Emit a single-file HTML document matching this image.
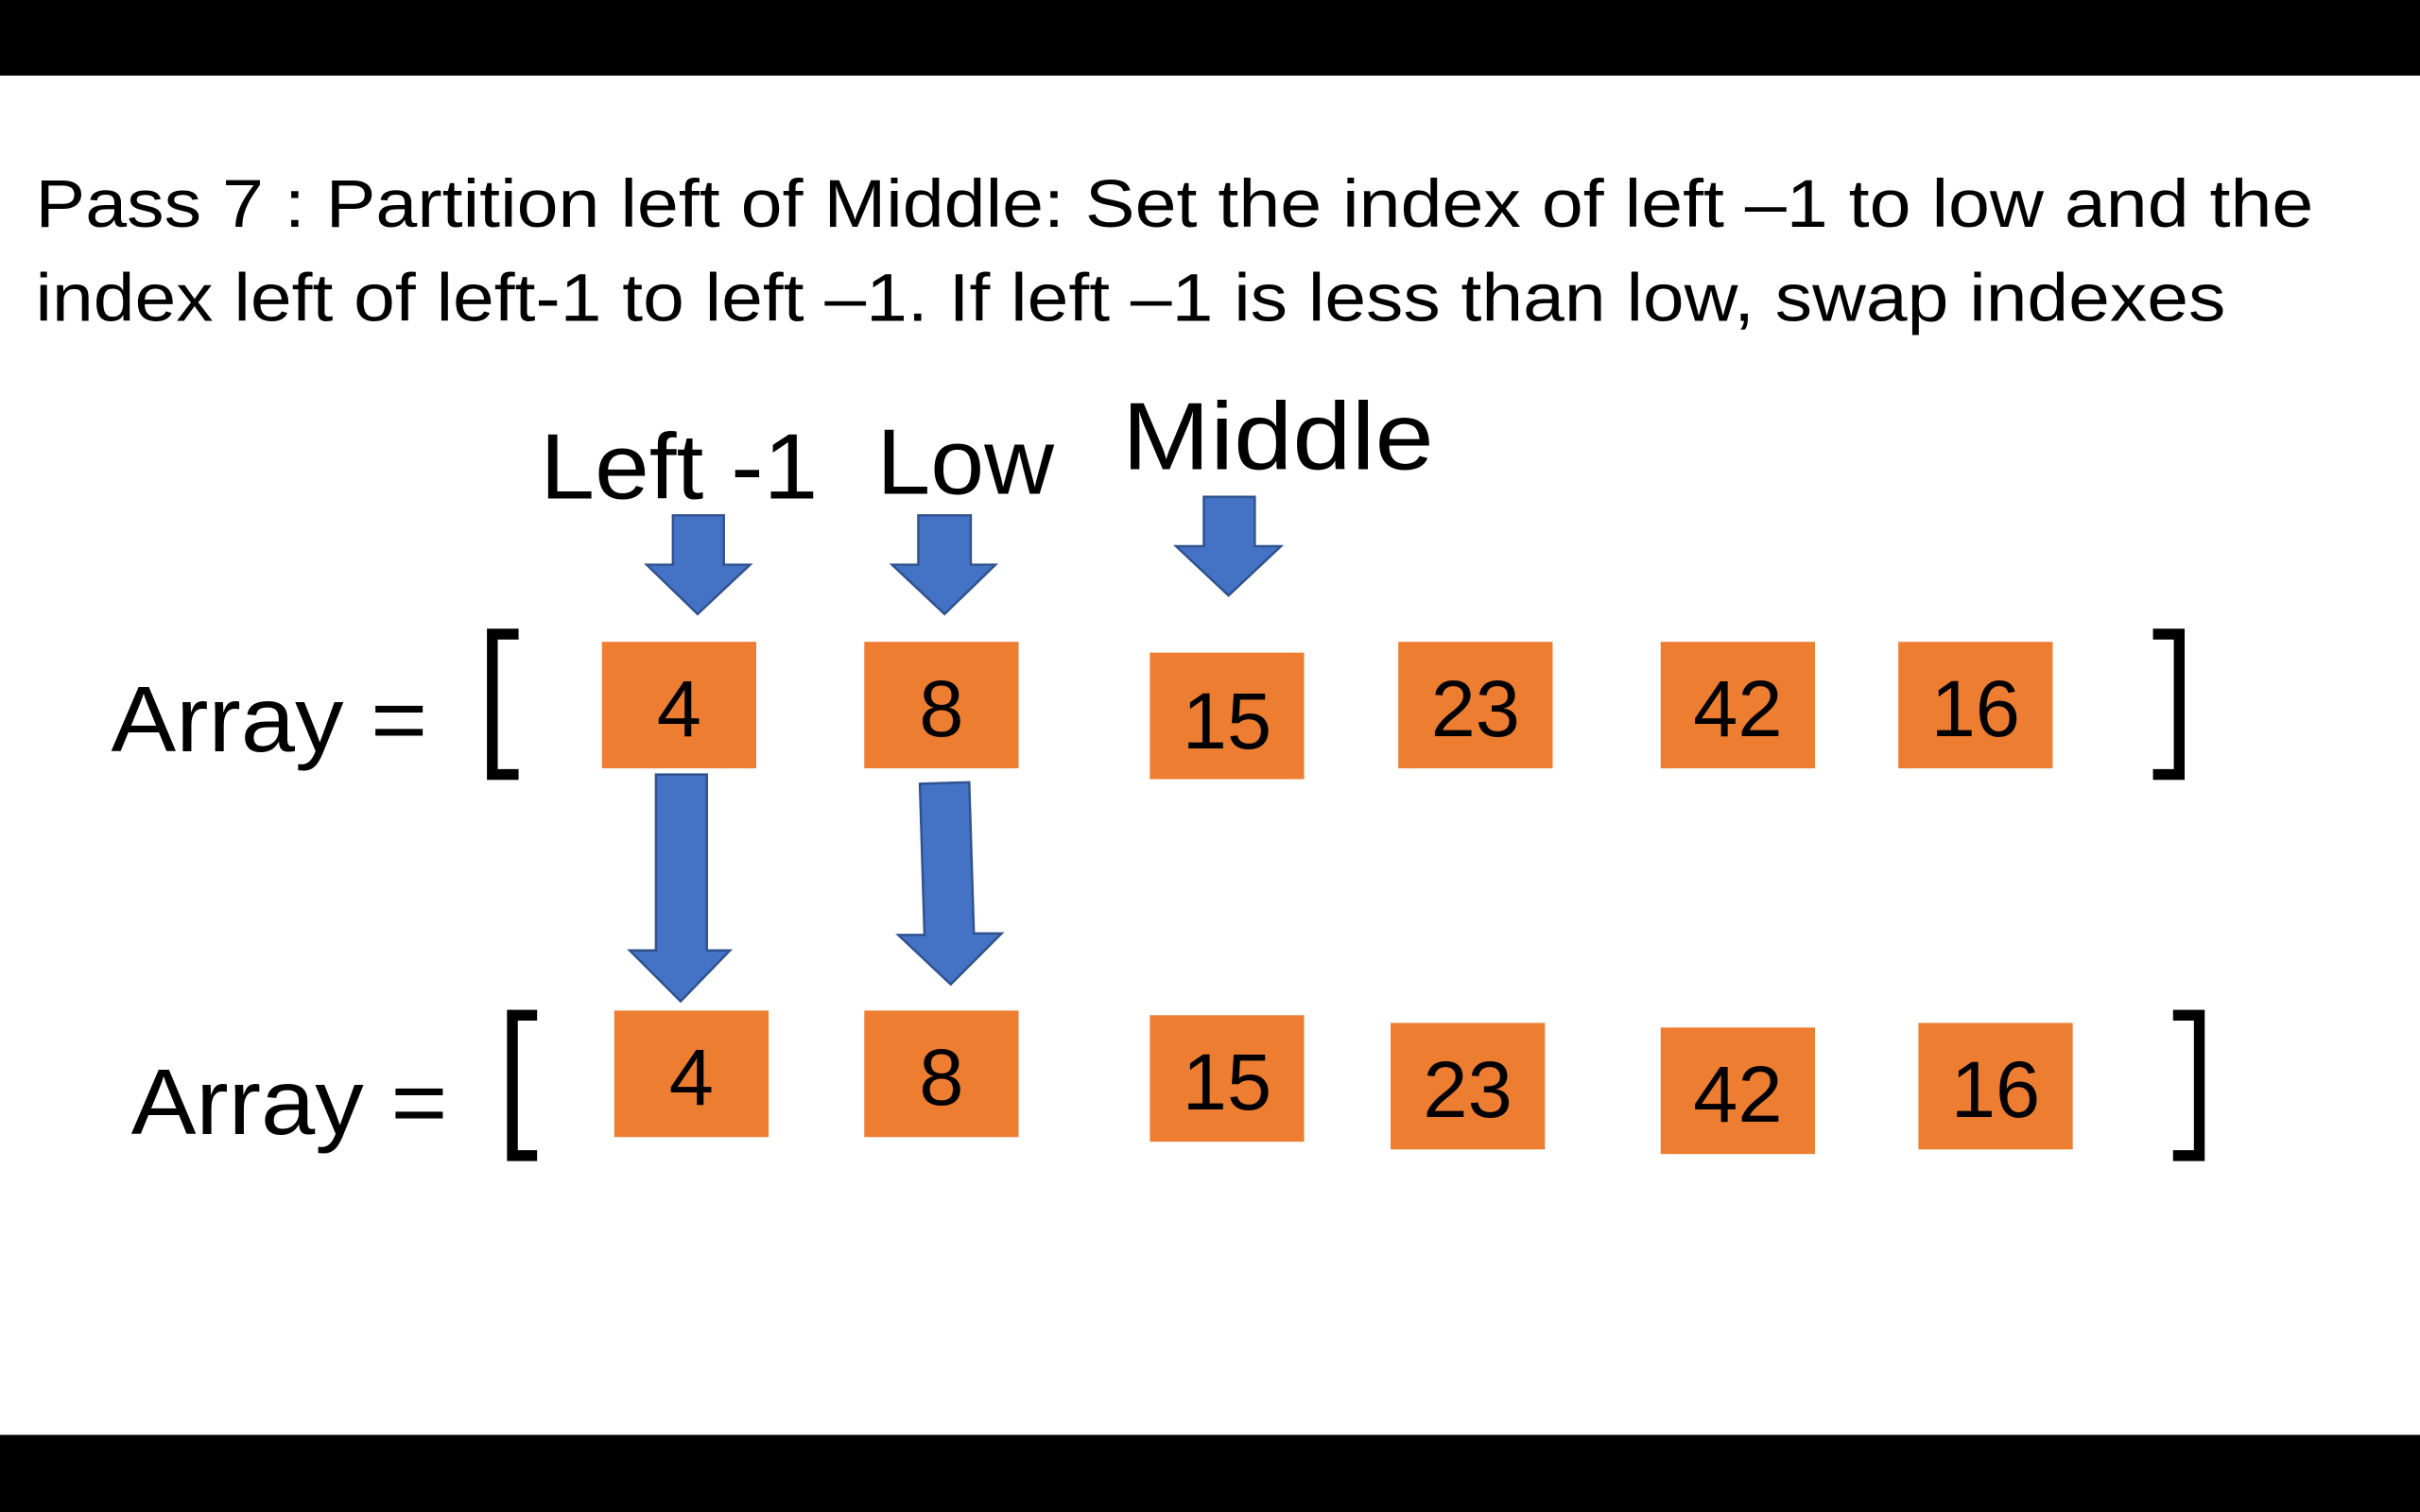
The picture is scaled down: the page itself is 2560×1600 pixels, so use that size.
<!DOCTYPE html>
<html><head><meta charset="utf-8"><style>
html,body{margin:0;padding:0;background:#fff;width:2560px;height:1600px;overflow:hidden}
svg{display:block}
text{font-family:"Liberation Sans",sans-serif;fill:#000}
</style></head><body>
<svg width="2560" height="1600" viewBox="0 0 1568 980">
<rect x="0" y="0" width="1568" height="49" fill="#000"/>
<rect x="0" y="930" width="1568" height="50" fill="#000"/>
<text x="23" y="147" font-size="44" textLength="1476" lengthAdjust="spacingAndGlyphs">Pass 7 : Partition left of Middle: Set the index of left –1 to low and the</text>
<text x="23" y="208" font-size="44" textLength="1419" lengthAdjust="spacingAndGlyphs">index left of left-1 to left –1. If left –1 is less than low, swap indexes</text>
<text x="350" y="323" font-size="60" textLength="180" lengthAdjust="spacingAndGlyphs">Left -1</text>
<text x="568" y="320" font-size="60" textLength="115" lengthAdjust="spacingAndGlyphs">Low</text>
<text x="727" y="304" font-size="62" textLength="202" lengthAdjust="spacingAndGlyphs">Middle</text>
<text x="72" y="487" font-size="60" textLength="205" lengthAdjust="spacingAndGlyphs">Array =</text>
<text x="85" y="735" font-size="60" textLength="205" lengthAdjust="spacingAndGlyphs">Array =</text>
<g fill="none" stroke="#000" stroke-width="7" stroke-linejoin="miter">
<path d="M336 411 H319 V502 H336"/>
<path d="M1395 411 H1412 V502 H1395"/>
<path d="M348 658 H332 V749 H348"/>
<path d="M1408 658 H1425 V749 H1408"/>
</g>
<g fill="#ED7D31">
<rect x="390" y="416" width="100" height="82"/>
<rect x="560" y="416" width="100" height="82"/>
<rect x="745" y="423" width="100" height="82"/>
<rect x="906" y="416" width="100" height="82"/>
<rect x="1076" y="416" width="100" height="82"/>
<rect x="1230" y="416" width="100" height="82"/>
<rect x="398" y="655" width="100" height="82"/>
<rect x="560" y="655" width="100" height="82"/>
<rect x="745" y="658" width="100" height="82"/>
<rect x="901" y="663" width="100" height="82"/>
<rect x="1076" y="666" width="100" height="82"/>
<rect x="1243" y="663" width="100" height="82"/>
</g>
<g font-size="52" text-anchor="middle">
<text x="440" y="477">4</text>
<text x="610" y="477">8</text>
<text x="795" y="485">15</text>
<text x="956" y="477">23</text>
<text x="1126" y="477">42</text>
<text x="1280" y="477">16</text>
<text x="448" y="716">4</text>
<text x="610" y="716">8</text>
<text x="795" y="719">15</text>
<text x="951" y="724">23</text>
<text x="1126" y="727">42</text>
<text x="1293" y="724">16</text>
</g>
<g fill="#4472C4" stroke="#2F528F" stroke-width="1.5">
<path d="M436 334 H469 V366 H486 L452 398 L419 366 H436 Z"/>
<path d="M595 334 H629 V366 H645 L612 398 L578 366 H595 Z"/>
<path d="M780 322 H813 V354 H830 L796 386 L762 354 H780 Z"/>
<path d="M425 502 H458 V616 H473 L441 649 L408 616 H425 Z"/>
<path d="M596 508 L628 507 L631 605 L649 605 L616 638 L582 606 L599 606 Z"/>
</g>
</svg>
</body></html>
